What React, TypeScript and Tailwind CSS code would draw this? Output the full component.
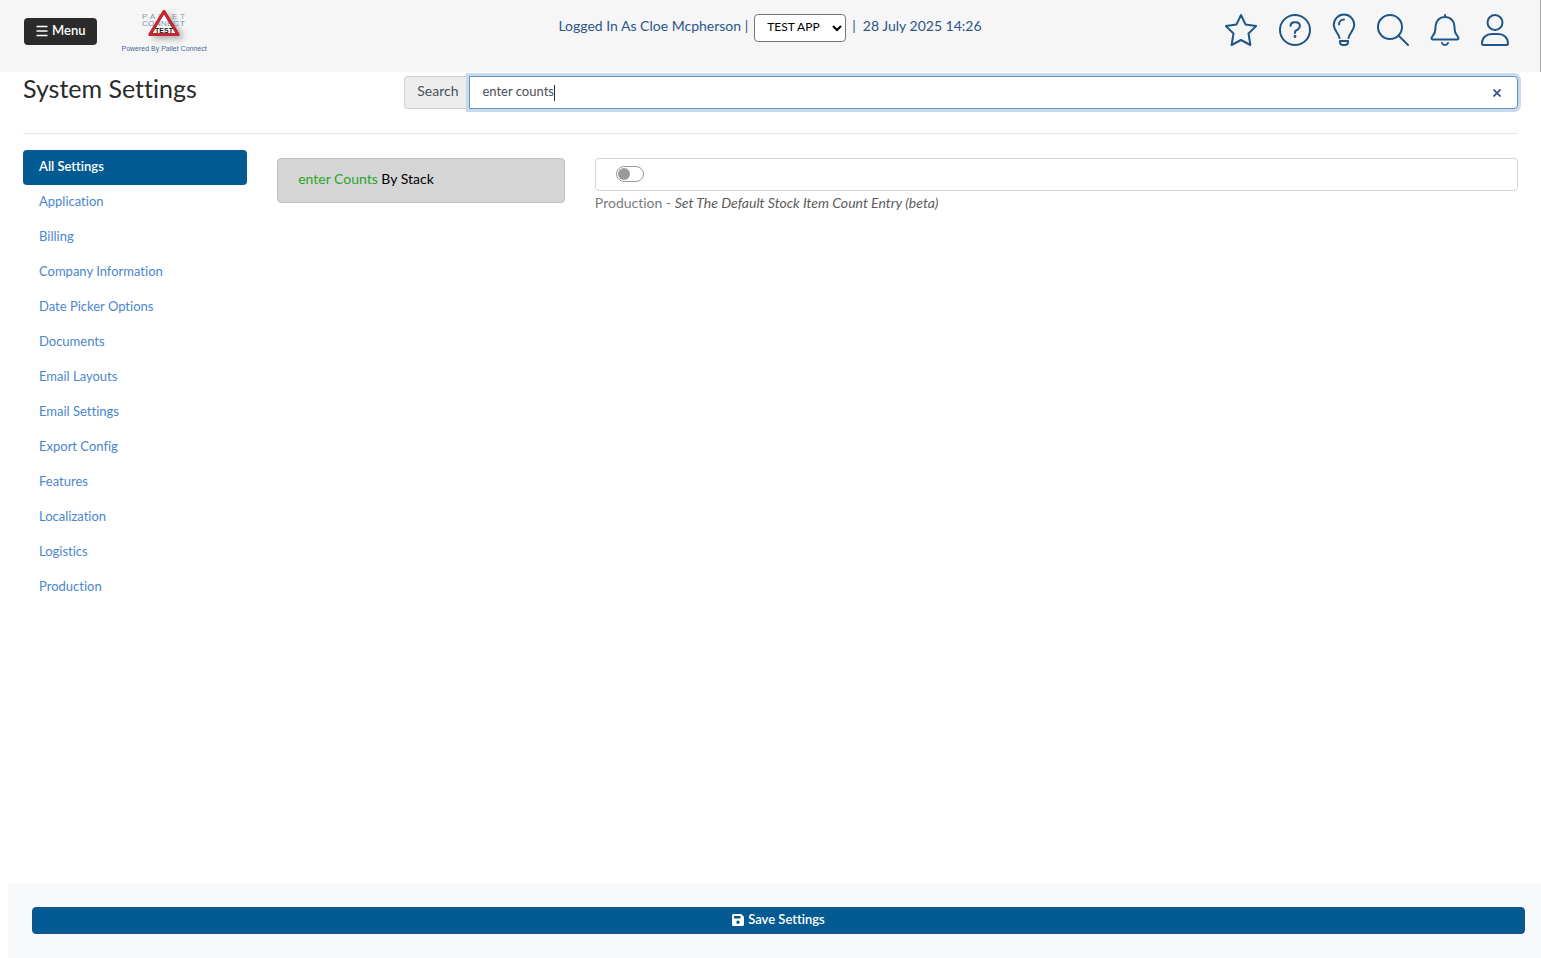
import { useState } from "react";
import type { ReactNode } from "react";

const sections = [
  "All Settings",
  "Application",
  "Billing",
  "Company Information",
  "Date Picker Options",
  "Documents",
  "Email Layouts",
  "Email Settings",
  "Export Config",
  "Features",
  "Localization",
  "Logistics",
  "Production",
];

interface HeaderIconProps {
  label: string;
  className: string;
  viewBox: string;
  children: ReactNode;
}

function HeaderIcon({ label, className, viewBox, children }: HeaderIconProps) {
  return (
    <button type="button" aria-label={label} className="cursor-pointer">
      <svg
        className={className}
        viewBox={viewBox}
        fill="none"
        stroke="currentColor"
        strokeWidth={2}
        strokeLinecap="round"
        strokeLinejoin="round"
      >
        {children}
      </svg>
    </button>
  );
}

function Logo() {
  return (
    <a href="#home" className="flex flex-col items-center text-[#3f6796]">
      <svg
        className="h-[37px] w-[60px]"
        viewBox="0 0 60 37"
        fontFamily="'Liberation Sans', Arial, sans-serif"
        role="img"
        aria-label="Pallet Connect Test"
      >
        <defs>
          <filter id="logoShadow" x="-40%" y="-40%" width="200%" height="200%">
            <feDropShadow dx="4" dy="3" stdDeviation="3" floodColor="#777" floodOpacity="0.6" />
          </filter>
        </defs>
        <text x="8 16 24 31 38 46" y="11" fill="#8a98ab" fontSize="8">
          PALLET
        </text>
        <path
          d="M30 3.500 L44 26.500 H16 Z"
          fill="#fff"
          stroke="#c3272f"
          strokeWidth="3"
          strokeLinejoin="round"
          filter="url(#logoShadow)"
        />
        <text x="8 14 21 27 33 39 46" y="18" fill="#6f8eb0" fontSize="8">
          CONNECT
        </text>
        <path d="M30 3.500 L44 26.500 H16 Z" stroke="#c3272f" strokeWidth="3" strokeLinejoin="round" fill="none" />
        <text x="30" y="25" fill="#151515" fontSize="7" fontWeight="900" textAnchor="middle">
          TEST
        </text>
      </svg>
      <span className="font-['Liberation_Sans',Arial,sans-serif] text-[7px] leading-[8px]">
        Powered By Pallet Connect
      </span>
    </a>
  );
}

function Header() {
  return (
    <header className="grid h-[72px] grid-cols-[1fr_auto_1fr] items-start border-r border-[#a8a8a8] bg-[#f6f6f6] text-[#2c558a]">
      <div className="flex items-start gap-6 pl-6">
        <button
          type="button"
          className="mt-[18px] flex h-[27px] cursor-pointer items-center gap-1 rounded bg-[#2b2b2b] px-3 pb-0.5 text-[13px] font-semibold text-white"
        >
          <svg className="h-3 w-3" viewBox="0 0 12 12" stroke="currentColor" strokeWidth="1.4">
            <path d="M.5 1.500h11M.5 6h11M.5 10.500h11" />
          </svg>
          Menu
        </button>
        <div className="pt-2">
          <Logo />
        </div>
      </div>

      <div className="flex items-center gap-1.5 pt-[14px] text-sm">
        <span className="pb-1">Logged In As Cloe Mcpherson&nbsp;|</span>
        <select
          aria-label="Application"
          className="h-7 w-[92px] rounded border border-[#767676] bg-white pb-1 pl-2 text-xs text-black"
        >
          <option>TEST APP</option>
        </select>
        <span className="pb-1">|&nbsp; 28 July 2025 14:26</span>
      </div>

      <div className="flex items-center justify-end gap-5 pt-[13px] pr-[30px] text-[#1f5688]">
        <HeaderIcon label="Favourites" className="h-[34px] w-[34px]" viewBox="0 0 34 34">
          <path d="M17 2l4.600 9.600 10.500 1.500-7.600 7.400 1.900 11.500-9.400-5-9.400 5 1.900-11.500L1.900 13.100l10.500-1.500z" />
        </HeaderIcon>
        <HeaderIcon label="Help" className="h-[34px] w-[34px]" viewBox="0 0 34 34">
          <circle cx="17" cy="17" r="15" />
          <path d="M12.500 12.800c.2-2.300 1.700-3.500 3.700-3.500h1.500c2.500 0 4.200 1.600 4.200 3.800 0 1.500-.8 2.500-2 3.300l-2 1.200c-.6.4-.9.9-.9 1.600v.7" />
          <circle cx="17" cy="23.500" r="1.400" fill="currentColor" stroke="none" />
        </HeaderIcon>
        <HeaderIcon label="Tips" className="h-[34px] w-6" viewBox="0 0 24 34">
          <path d="M7.500 25C7 20.500 1.800 17.500 1.800 11.800a10.200 10.200 0 0120.400 0c0 5.700-5.200 8.700-5.700 13.200M8 28h8v1a3 3 0 01-3 3h-2a3 3 0 01-3-3zM7 11.500a5 5 0 015-5" />
        </HeaderIcon>
        <HeaderIcon label="Search" className="h-[34px] w-[34px]" viewBox="0 0 34 34">
          <circle cx="14" cy="14" r="12" />
          <path d="M22.500 22.500L32 32" />
        </HeaderIcon>
        <HeaderIcon label="Notifications" className="h-[34px] w-[30px]" viewBox="0 0 30 34">
          <path d="M15 2v2M15 4c-5.500 0-9.500 4.200-9.500 9.500v2c0 3.200-1 5.400-2.900 7.700l-.7.900c-.9 1.100-.2 2.400 1.200 2.400h23.800c1.400 0 2.100-1.300 1.200-2.400l-.7-.9c-1.900-2.300-2.900-4.500-2.900-7.700v-2C24.500 8.200 20.500 4 15 4zM12 30c.5 1.300 1.600 2 3 2s2.500-.7 3-2" />
        </HeaderIcon>
        <HeaderIcon label="Account" className="h-[34px] w-[30px]" viewBox="0 0 30 34">
          <circle cx="15" cy="9.500" r="7.500" />
          <path d="M2 30.500C2 24.700 6.400 21 11.800 21h6.400C23.600 21 28 24.700 28 30.500c0 .8-.6 1.500-1.500 1.500h-23c-.9 0-1.500-.7-1.500-1.500z" />
        </HeaderIcon>
      </div>
    </header>
  );
}

interface SearchBarProps {
  value: string;
  onChange: (value: string) => void;
}

function SearchBar({ value, onChange }: SearchBarProps) {
  return (
    <div className="flex h-[33px] text-[#495057]">
      <label
        htmlFor="settings-search"
        className="flex items-center rounded-l border border-r-0 border-[#d0d0d0] bg-[#ededed] pr-[11px] pb-1 pl-3 text-sm"
      >
        Search
      </label>
      <div className="flex flex-1 rounded-r border border-[#5f94cb] bg-white ring-[3px] ring-[#c7d9ea]">
        {/* The input grows with its text, so the caret bar follows it */}
        <label className="flex min-w-0 flex-1 cursor-text items-center">
          <input
            id="settings-search"
            type="text"
            autoFocus
            value={value}
            onChange={(e) => onChange(e.target.value)}
            className="h-full max-w-full bg-transparent pb-1 pl-3 text-[13px] caret-transparent outline-none [field-sizing:content]"
          />
          <span className="h-4 w-px bg-[#333333]" />
        </label>
        <button
          type="button"
          aria-label="Clear search"
          onClick={() => onChange("")}
          className="cursor-pointer px-4 text-[#3c528b]"
        >
          <svg className="h-2 w-2" viewBox="0 0 8 8" stroke="currentColor" strokeWidth="1.8">
            <path d="M.5.500l7 7M7.500.500l-7 7" />
          </svg>
        </button>
      </div>
    </div>
  );
}

export default function App() {
  const [search, setSearch] = useState("enter counts");
  const [active, setActive] = useState("All Settings");
  const [byStack, setByStack] = useState(false);

  return (
    <div className="flex min-h-screen flex-col bg-white font-[Lato,'Liberation_Sans',sans-serif] [font-variant-ligatures:none]">
      <Header />

      <main className="px-[23px]">
        {/* Title and search */}
        <div className="grid grid-cols-12 gap-x-[30px] border-b border-[#e6e6e6] pt-1 pb-6">
          <h1 className="col-span-3 text-[25px] leading-6 text-[#2b2b2b]">System Settings</h1>
          <div className="col-span-9">
            <SearchBar value={search} onChange={setSearch} />
          </div>
        </div>

        <div className="grid grid-cols-12 gap-x-[30px] pt-4 text-sm">
          <nav className="col-span-2 flex flex-col text-[13px]">
            {sections.map((name) => (
              <a
                key={name}
                href="#settings"
                onClick={() => setActive(name)}
                className={`flex h-[35px] items-center rounded px-4 pb-0.5 ${
                  active === name
                    ? "bg-[#045a93] font-semibold text-white"
                    : "text-[#4a86cc]"
                }`}
              >
                {name}
              </a>
            ))}
          </nav>

          {/* Matching settings */}
          <div className="col-span-10 grid grid-cols-12 items-start gap-x-[30px] pt-2">
            <label
              htmlFor="counts-by-stack"
              className="col-span-3 flex h-[45px] items-center rounded border border-[#c0c0c0] bg-[#d5d5d5] px-5 pb-1 text-black"
            >
              <span>
                <span className="text-[#2aa52a]">enter Counts</span> By Stack
              </span>
            </label>
            <div className="col-span-9">
              <div className="flex h-[33px] items-center rounded border border-[#ced4da] px-5 pb-0.5">
                <input
                  id="counts-by-stack"
                  type="checkbox"
                  role="switch"
                  checked={byStack}
                  onChange={(e) => setByStack(e.target.checked)}
                  className="h-4 w-7 cursor-pointer appearance-none rounded-full border border-[#9a9a9a] bg-white p-px before:block before:h-3 before:w-3 before:rounded-full before:bg-[#9a9a9a] checked:before:ml-3"
                />
              </div>
              <p className="pt-0.5 text-[#7b7b7b]">
                Production - <em className="text-[#5c5c5c]">Set The Default Stock Item Count Entry (beta)</em>
              </p>
            </div>
          </div>
        </div>
      </main>

      <footer className="mt-auto ml-2 bg-[#f7f9fb] py-6 pr-4 pl-6">
        <button
          type="button"
          className="flex h-[27px] w-full cursor-pointer items-center justify-center gap-1 rounded border border-[#19527d] bg-[#045a93] pb-0.5 text-[13px] font-semibold text-white"
        >
          <svg className="h-3 w-3" viewBox="0 0 12 12" fill="currentColor" fillRule="evenodd">
            <path d="M1.500 0h7.200c.4 0 .8.200 1.100.5l1.700 1.700c.3.300.5.700.5 1.100v7.200c0 .8-.7 1.500-1.500 1.500h-9C.7 12 0 11.300 0 10.500v-9C0 .7.700 0 1.500 0zM2 2v2.500h6.500V2zM6 6.500a1.700 1.700 0 100 3.400 1.700 1.700 0 000-3.400z" />
          </svg>
          Save Settings
        </button>
      </footer>
    </div>
  );
}
